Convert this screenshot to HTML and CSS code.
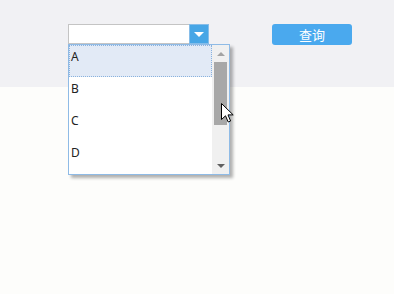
FILE: index.html
```html
<!DOCTYPE html>
<html lang="zh">
<head>
  <meta charset="UTF-8">
  <title>查询</title>
  <link rel="stylesheet" href="styles.css">
</head>
<body>
  <div class="toolbar">
    <div class="combo">
      <div class="combo-input"></div>
      <div class="combo-arrow"><span class="tri-down"></span></div>
      <div class="dropdown">
        <ul class="options">
          <li class="option active">A</li>
          <li class="option">B</li>
          <li class="option">C</li>
          <li class="option">D</li>
        </ul>
        <div class="scrollbar">
          <div class="sb-btn"><span class="sb-up"></span></div>
          <div class="sb-track"><div class="sb-thumb"></div></div>
          <div class="sb-btn"><span class="sb-down"></span></div>
        </div>
        <svg class="cursor" width="13" height="20" viewBox="0 0 13 20">
          <path d="M0.5 0.5 L0.5 16.5 L4.5 12.8 L7.2 19 L9.6 18 L7 11.9 L12.2 11.9 Z" fill="#fff" stroke="#000" stroke-width="1" stroke-linejoin="miter"/>
        </svg>
      </div>
    </div>
    <button class="search-btn">查询</button>
  </div>
  <div class="content"></div>
</body>
</html>
```

FILE: styles.css
```css
html, body {
  height: 100%;
}
body {
  margin: 0;
  background: #fdfdfb;
  font-family: "Noto Sans", "Noto Sans CJK SC", sans-serif;
  font-size: 12px;
  color: #222;
  display: flex;
  flex-direction: column;
}

.toolbar {
  height: 87px;
  flex-shrink: 0;
  box-sizing: border-box;
  background: #f1f1f4;
  padding: 24px 0 0 68px;
  display: flex;
  align-items: flex-start;
  gap: 63px;
  position: relative;
  z-index: 1;
}
.content {
  flex: 1;
}

.combo {
  position: relative;
  display: flex;
  width: 141px;
  height: 20px;
  box-sizing: border-box;
  border: 1px solid #c4c4c4;
  background: #fff;
}
.combo-input {
  flex: 1;
}
.combo-arrow {
  width: 18px;
  margin: -1px -1px -1px 0;
  background: #47a6e6;
  border: 1px solid #86bde9;
  display: flex;
  justify-content: center;
  align-items: center;
}
.tri-down {
  width: 0;
  height: 0;
  border-left: 5px solid transparent;
  border-right: 5px solid transparent;
  border-top: 5px solid #fff;
  margin-top: 1px;
}

.dropdown {
  position: absolute;
  top: 19px;
  left: -1px;
  width: 162px;
  height: 131px;
  box-sizing: border-box;
  border: 1px solid #8fbbe6;
  background: #fff;
  box-shadow: 3px 3px 3px rgba(0, 0, 0, 0.3);
  display: flex;
  z-index: 2;
}
.options {
  list-style: none;
  margin: 0;
  padding: 0;
  width: 143px;
}
.option {
  height: 32px;
  box-sizing: border-box;
  padding: 4px 0 0 2px;
  line-height: 16px;
}
.option.active {
  background: #e2eaf6;
  border: 1px dotted #8ab2de;
  padding: 3px 0 0 1px;
}

.scrollbar {
  width: 17px;
  background: #f0f0f0;
  display: flex;
  flex-direction: column;
}
.sb-btn {
  height: 17px;
  display: flex;
  justify-content: center;
  align-items: center;
}
.sb-up {
  width: 0;
  height: 0;
  border-left: 4px solid transparent;
  border-right: 4px solid transparent;
  border-bottom: 4px solid #a3a3a3;
}
.sb-down {
  width: 0;
  height: 0;
  border-left: 4px solid transparent;
  border-right: 4px solid transparent;
  border-top: 4px solid #606060;
}
.sb-track {
  flex: 1;
}
.sb-thumb {
  width: 13px;
  height: 63px;
  margin-left: 2px;
  background: #a8a8a8;
}

.cursor {
  position: absolute;
  left: 152px;
  top: 58px;
}

.search-btn {
  width: 80px;
  height: 21px;
  border: none;
  border-radius: 3px;
  background: #4aa9ee;
  color: #fff;
  font-family: "Noto Sans CJK SC", sans-serif;
  font-size: 13px;
  line-height: 21px;
  padding: 0;
}
```
